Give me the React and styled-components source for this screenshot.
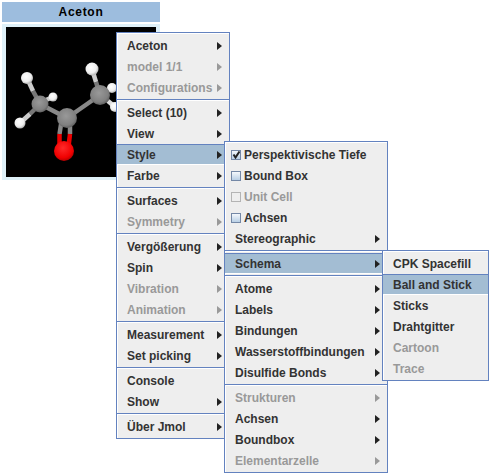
import styled, { createGlobalStyle } from "styled-components";

const GlobalStyle = createGlobalStyle`
  html, body {
    margin: 0;
    background: #fff;
  }
`;

const Page = styled.div`
  position: relative;
  width: 495px;
  height: 473px;
  overflow: hidden;
  padding: 2px 0 0 2px;
  box-sizing: border-box;
  font-family: "Liberation Sans", Arial, sans-serif;
  font-size: 12px;
  font-weight: 700;
  color: #333;
`;

const Viewer = styled.div`
  width: 158px;
  display: flex;
  flex-direction: column;
  gap: 2px;
`;

const Title = styled.div`
  height: 20px;
  line-height: 20px;
  background: #9dbdde;
  color: #000;
  text-align: center;
  letter-spacing: 0.7px;
`;

const Canvas = styled.div`
  background: #def0f8;
  padding: 3px 4px;
  height: 150px;
`;

const Menu = styled.div`
  position: absolute;
  left: ${(p) => p.$x}px;
  top: ${(p) => p.$y}px;
  width: ${(p) => p.$w}px;
  box-sizing: border-box;
  padding: 2px 0 1px;
  border: 1px solid #6382bf;
  background: #eee;
  box-shadow: inset 1px 1px 0 #fff;
`;

const Item = styled.div`
  height: 21px;
  box-sizing: border-box;
  display: flex;
  align-items: center;
  padding: 0 7px 0 10px;
  color: ${(p) => (p.$off ? "#999" : "#333")};
  background: ${(p) => (p.$on ? "#a3bdd3" : "transparent")};
  border-top: 1px solid ${(p) => (p.$on ? "#6382bf" : "transparent")};
  border-bottom: 1px solid ${(p) => (p.$on ? "#fff" : "transparent")};
`;

const Label = styled.span`
  flex: 1;
  white-space: nowrap;
`;

const Arrow = styled.i`
  width: 0;
  height: 0;
  border-style: solid;
  border-width: 4.5px 0 4.5px 5px;
  border-color: transparent transparent transparent ${(p) => (p.$off ? "#999" : "#222")};
`;

const Separator = styled.div`
  height: 2px;
  box-sizing: border-box;
  margin: 1px 0;
  border-top: 1px solid #6382bf;
  border-bottom: 1px solid #fff;
`;

const Box = styled.span`
  width: 10px;
  height: 10px;
  box-sizing: border-box;
  margin: 0 3px 0 -4px;
  display: flex;
  border: 1px solid ${(p) => (p.$off ? "#b4b4b4" : "#7488a6")};
  background: ${(p) => (p.$off ? "#eee" : "linear-gradient(180deg, #f4f8fc, #b8cfe5)")};
`;

function Molecule() {
  const atoms = [
    [112, 88, 5, "h"], [115, 107, 5, "h"], [53, 97, 4.5, "h"],
    [27, 78, 6, "h"], [92, 69, 6.5, "h"], [20, 123, 5.5, "h"],
    [40, 104, 8.5, "c"], [100, 95, 10, "c"], [67, 118, 10, "c"], [64, 151, 10, "o"],
  ];
  const sticks = [
    [40, 104, 33, 91, "#777"], [33, 91, 27, 78, "#ccc"],
    [40, 104, 46, 100, "#777"], [46, 100, 53, 97, "#ccc"],
    [40, 104, 30, 114, "#777"], [30, 114, 20, 123, "#ccc"],
    [100, 95, 96, 82, "#777"], [96, 82, 92, 69, "#ccc"],
    [100, 95, 106, 92, "#777"], [106, 92, 112, 88, "#ccc"],
    [100, 95, 108, 101, "#777"], [108, 101, 115, 107, "#ddd"],
    [40, 104, 67, 118, "#888"], [67, 118, 100, 95, "#888"],
    [62, 118, 59.5, 134, "#888"], [59.5, 134, 59.5, 151, "#e00"],
    [70, 118, 70, 134, "#888"], [70, 134, 68, 151, "#e00"],
  ];
  return (
    <svg width="150" height="150" viewBox="6 27 150 150" style={{ display: "block", background: "#000" }}>
      <defs>
        <radialGradient id="h" cx="0.42" cy="0.38" r="0.65">
          <stop offset="0" stopColor="#fff" />
          <stop offset="0.65" stopColor="#eee" />
          <stop offset="1" stopColor="#aaa" />
        </radialGradient>
        <radialGradient id="c" cx="0.45" cy="0.4" r="0.65">
          <stop offset="0" stopColor="#999" />
          <stop offset="0.7" stopColor="#808080" />
          <stop offset="1" stopColor="#555" />
        </radialGradient>
        <radialGradient id="o" cx="0.45" cy="0.35" r="0.7">
          <stop offset="0" stopColor="#ff2a2a" />
          <stop offset="0.7" stopColor="#f00000" />
          <stop offset="1" stopColor="#a00000" />
        </radialGradient>
      </defs>
      {sticks.map(([x1, y1, x2, y2, c], i) => (
        <line key={i} x1={x1} y1={y1} x2={x2} y2={y2} stroke={c} strokeWidth="4.5" />
      ))}
      {atoms.map(([cx, cy, r, t], i) => (
        <circle key={i} cx={cx} cy={cy} r={r} fill={`url(#${t})`} />
      ))}
    </svg>
  );
}

function Check() {
  return (
    <svg width="8" height="8" viewBox="0 0 8 8">
      <path d="M1.5 3.5 L3.5 6.5 L7.5 0.5" fill="none" stroke="#222" strokeWidth="2" />
    </svg>
  );
}

const mainMenu = [
  [["Aceton", "a"], ["model 1/1", "ao"], ["Configurations", "ao"]],
  [["Select (10)", "a"], ["View", "a"], ["Style", "as"], ["Farbe", "a"]],
  [["Surfaces", "a"], ["Symmetry", "ao"]],
  [["Vergößerung", "a"], ["Spin", "a"], ["Vibration", "ao"], ["Animation", "ao"]],
  [["Measurement", "a"], ["Set picking", "a"]],
  [["Console", ""], ["Show", "a"]],
  [["Über Jmol", "a"]],
];

const styleMenu = [
  [["Perspektivische Tiefe", "xc"], ["Bound Box", "x"], ["Unit Cell", "xo"], ["Achsen", "x"], ["Stereographic", "a"]],
  [["Schema", "as"]],
  [["Atome", "a"], ["Labels", "a"], ["Bindungen", "a"], ["Wasserstoffbindungen", "a"], ["Disulfide Bonds", "a"]],
  [["Strukturen", "ao"], ["Achsen", "a"], ["Boundbox", "a"], ["Elementarzelle", "ao"]],
];

const schemaMenu = [
  [["CPK Spacefill", ""], ["Ball and Stick", "s"], ["Sticks", ""], ["Drahtgitter", ""], ["Cartoon", "o"], ["Trace", "o"]],
];

function PopupMenu({ x, y, w, groups }) {
  return (
    <Menu $x={x} $y={y} $w={w}>
      {groups.map((group, g) => (
        <div key={g}>
          {g > 0 && <Separator />}
          {group.map(([text, flags]) => {
            const off = flags.includes("o");
            return (
              <Item key={text} $off={off} $on={flags.includes("s")}>
                {flags.includes("x") && <Box $off={off}>{flags.includes("c") && <Check />}</Box>}
                <Label>{text}</Label>
                {flags.includes("a") && <Arrow $off={off} />}
              </Item>
            );
          })}
        </div>
      ))}
    </Menu>
  );
}

export default function App() {
  return (
    <Page>
      <GlobalStyle />
      <Viewer>
        <Title>Aceton</Title>
        <Canvas>
          <Molecule />
        </Canvas>
      </Viewer>
      <PopupMenu x={116} y={32} w={114} groups={mainMenu} />
      <PopupMenu x={224} y={141} w={164} groups={styleMenu} />
      <PopupMenu x={382} y={250} w={107} groups={schemaMenu} />
    </Page>
  );
}
